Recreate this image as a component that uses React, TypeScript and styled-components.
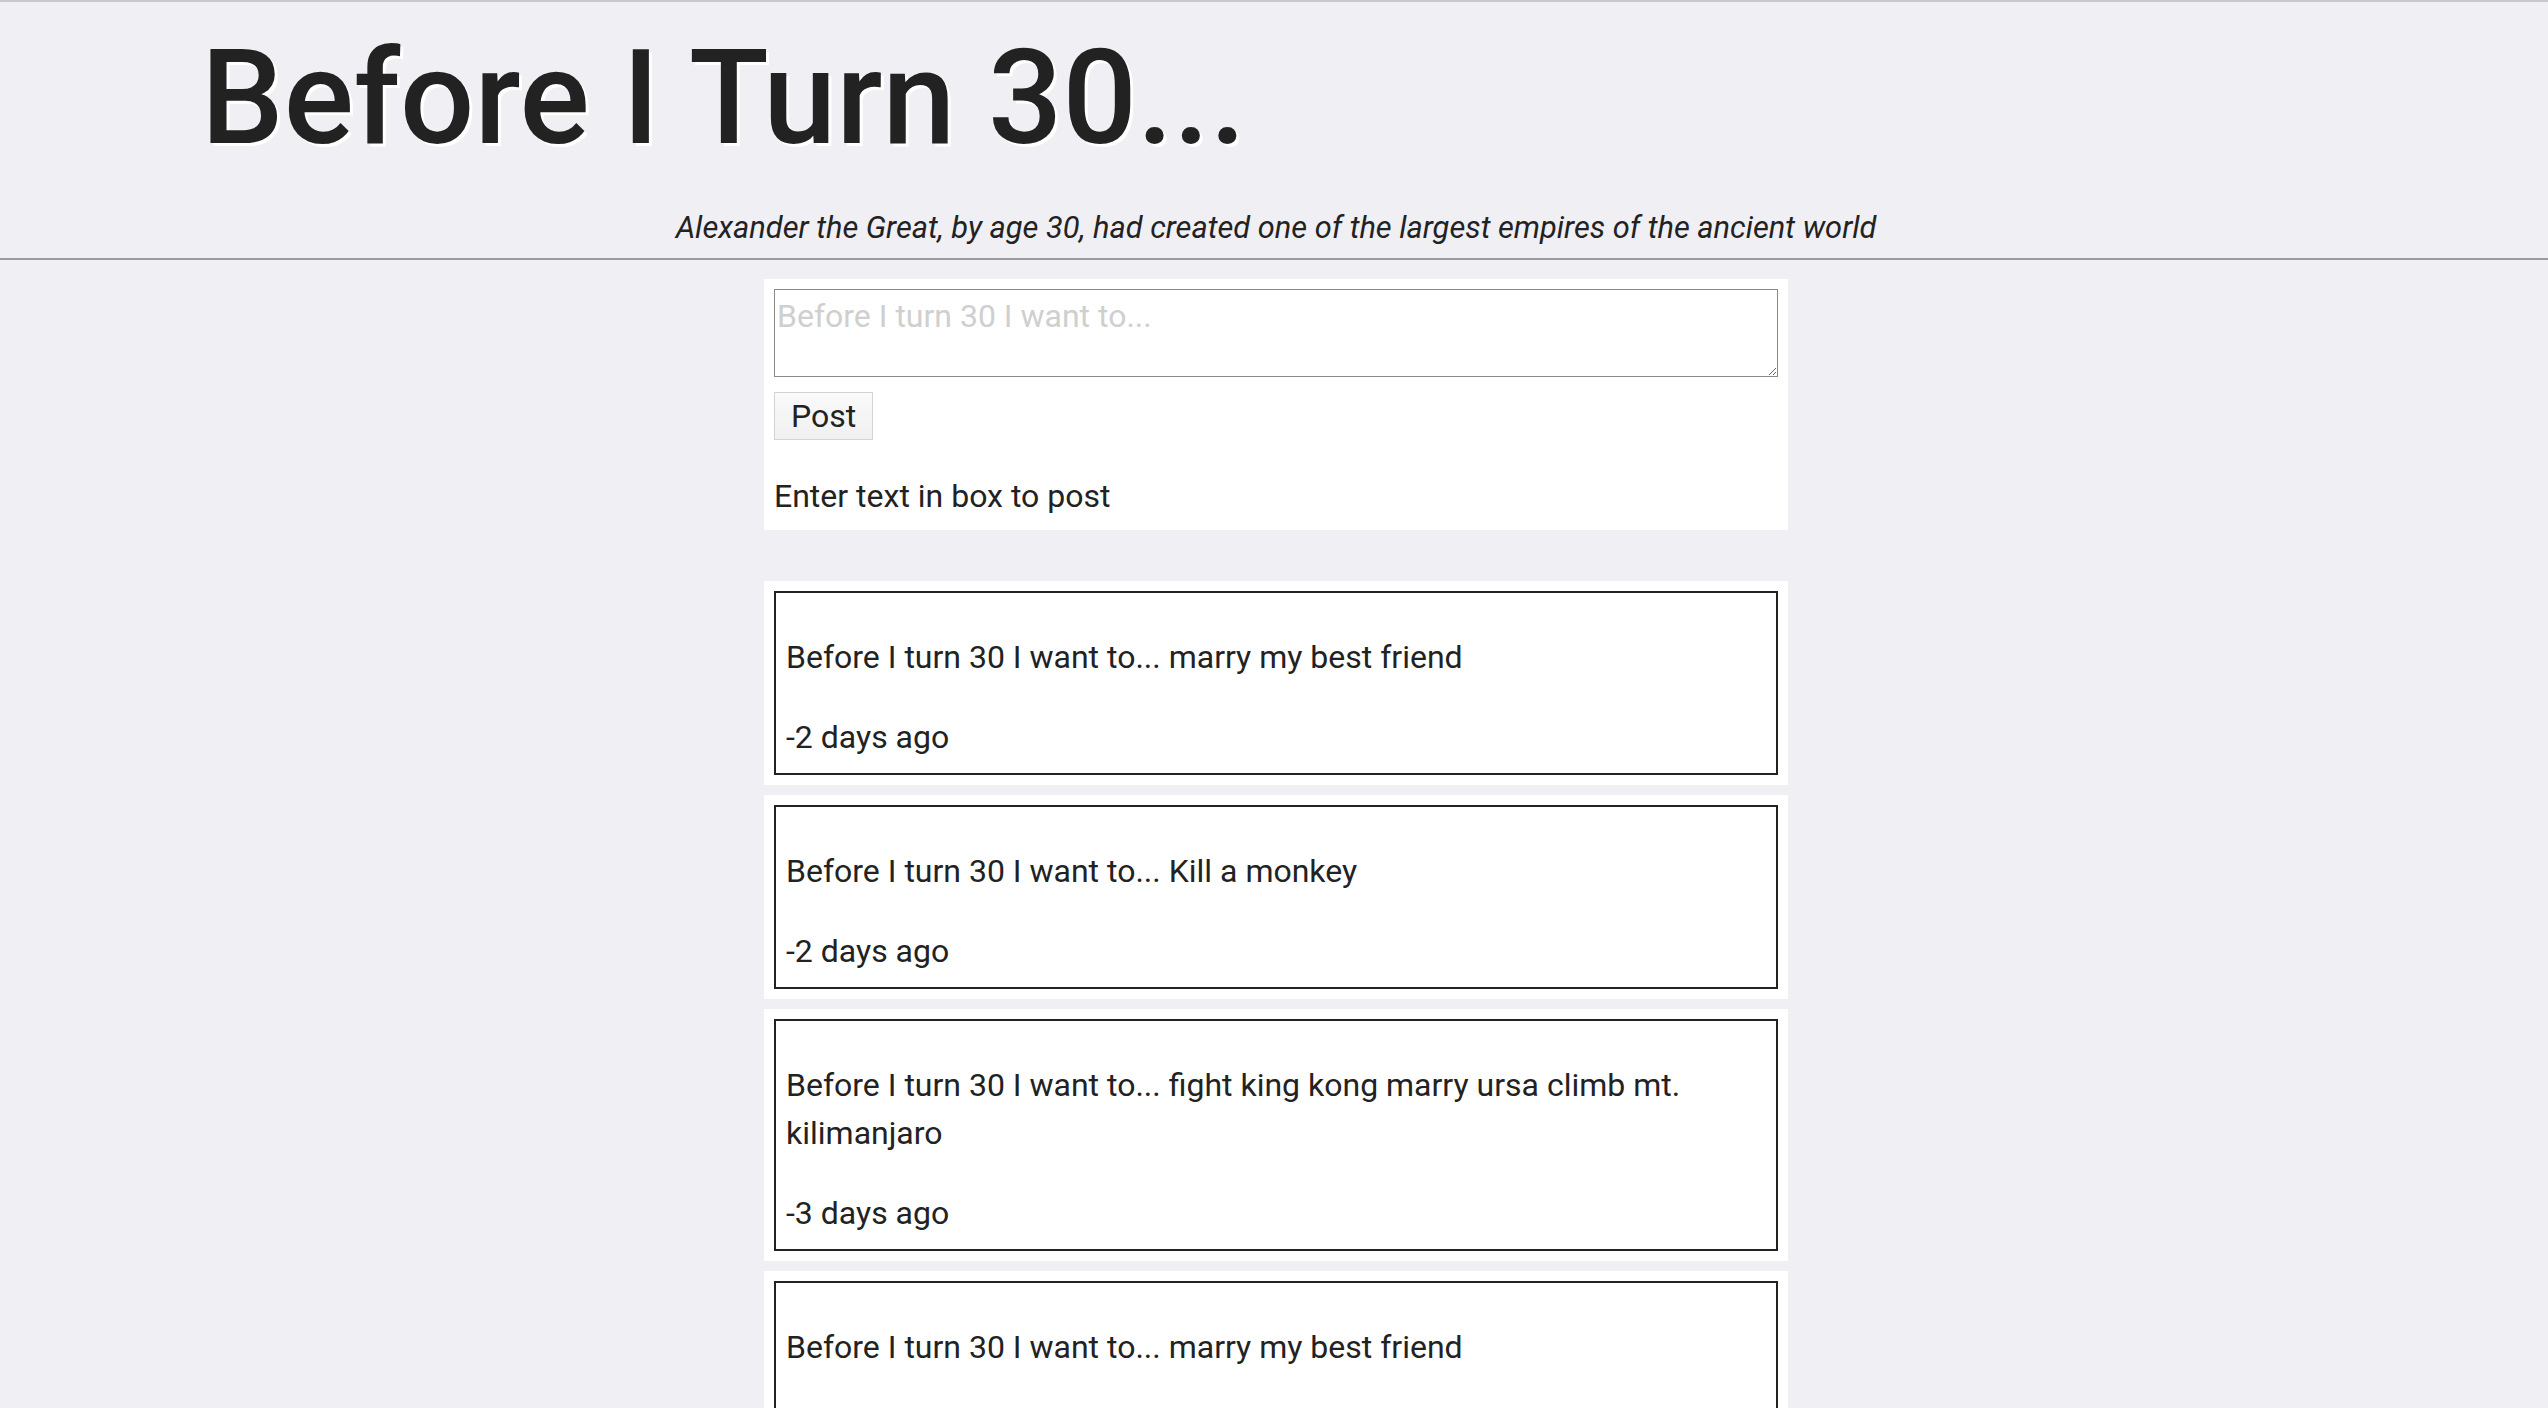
import React, { useState } from "react";
import styled, { createGlobalStyle } from "styled-components";

type Post = {
	id: number;
	text: string;
	age: string;
};

const GlobalStyle = createGlobalStyle`
	html, body {
		margin: 0;
		padding: 0;
		background: #efeff4;
	}
	body {
		font-family: Roboto, "Liberation Sans", sans-serif;
		color: #222;
	}
`;

// Posts shown on first load
const initialPosts: Post[] = [
	{ id: 1, text: "marry my best friend", age: "-2 days ago" },
	{ id: 2, text: "Kill a monkey", age: "-2 days ago" },
	{ id: 3, text: "fight king kong marry ursa climb mt. kilimanjaro", age: "-3 days ago" },
	{ id: 4, text: "marry my best friend", age: "-4 days ago" },
];

function App() {
	const [posts, setPosts] = useState<Post[]>(initialPosts);
	const [draft, setDraft] = useState("");

	const handlePost = () => {
		if (!draft.trim()) return;
		setPosts((prev) => [{ id: Date.now(), text: draft.trim(), age: "-0 days ago" }, ...prev]);
		setDraft("");
	};

	return (
		<>
			<GlobalStyle />
			<StyledHeader>
				<StyledTitle>Before I Turn 30...</StyledTitle>
				<StyledQuote>
					Alexander the Great, by age 30, had created one of the largest empires of the ancient world
				</StyledQuote>
			</StyledHeader>

			<StyledMain>
				<StyledCard>
					<StyledTextArea
						placeholder="Before I turn 30 I want to..."
						value={draft}
						onChange={(e) => setDraft(e.target.value)}
					/>
					<StyledButton onClick={handlePost}>Post</StyledButton>
					<StyledHint>Enter text in box to post</StyledHint>
				</StyledCard>

				<StyledList>
					{posts.map((p) => (
						<StyledCard key={p.id}>
							<StyledPostBox>
								<StyledPostText>Before I turn 30 I want to... {p.text}</StyledPostText>
								<StyledPostAge>{p.age}</StyledPostAge>
							</StyledPostBox>
						</StyledCard>
					))}
				</StyledList>
			</StyledMain>
		</>
	);
}

const StyledHeader = styled.header`
	border-top: 2px solid #c9c9cc;
	border-bottom: 2px solid #9c9c9c;
	padding: 0 0 7px;
`;

const StyledTitle = styled.h1`
	margin: 19px 0 0 201px;
	font-size: 131px;
	font-weight: 500;
	line-height: normal;
	color: #222;
	text-shadow: 3px 3px 0 #fff;
`;

const StyledQuote = styled.p`
	margin: 31px 0 0;
	text-align: center;
	font-style: italic;
	font-size: 30.8px;
	line-height: 1.45;
	padding-left: 4px;
`;

const StyledMain = styled.main`
	display: flex;
	flex-direction: column;
	align-items: center;
	padding: 19px 0 40px 4px;
`;

const StyledCard = styled.section`
	box-sizing: border-box;
	width: 1024px;
	background: #fff;
	padding: 10px;
	display: flex;
	flex-direction: column;
	align-items: flex-start;
`;

const StyledTextArea = styled.textarea`
	box-sizing: border-box;
	width: 100%;
	height: 88px;
	padding: 2px;
	border: 1px solid #8a8a8a;
	font-family: Roboto, "Liberation Sans", sans-serif;
	font-size: 32px;
	line-height: 1.5;
	color: #222;
	resize: vertical;
	outline: none;

	&::placeholder {
		color: #cfcfcf;
	}
`;

const StyledButton = styled.button`
	margin-top: 15px;
	padding: 4px 16px;
	font-family: Roboto, "Liberation Sans", sans-serif;
	font-size: 32px;
	line-height: normal;
	color: #222;
	background: linear-gradient(#fafafa, #f0f0f0);
	border: 1px solid #d3d3d3;
	border-radius: 0;
	cursor: pointer;
`;

const StyledHint = styled.p`
	margin: 32px 0 0;
	font-size: 32px;
	line-height: 1.5;
`;

const StyledList = styled.div`
	margin-top: 51px;
	display: flex;
	flex-direction: column;
	gap: 10px;
`;

const StyledPostBox = styled.div`
	box-sizing: border-box;
	width: 100%;
	border: 2px solid #222;
	padding: 8px 10px 12px;
`;

const StyledPostText = styled.p`
	margin: 32px 0 0;
	font-size: 32px;
	line-height: 1.5;
`;

const StyledPostAge = styled.p`
	margin: 32px 0 0;
	font-size: 32px;
	line-height: 1.5;
`;

export default App;
